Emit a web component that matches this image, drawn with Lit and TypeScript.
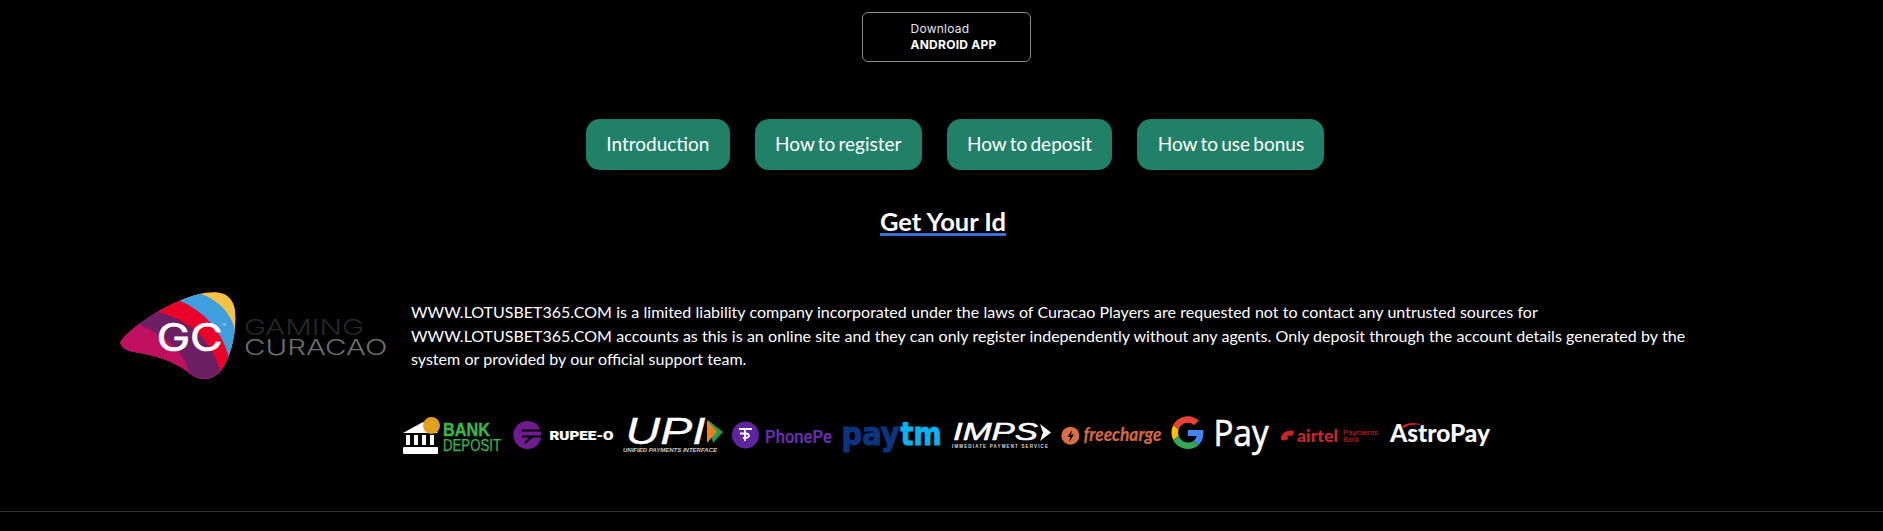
import { LitElement, html, css, svg } from "lit";
import { customElement } from "lit/decorators.js";

const W = "#fff";

@customElement("app-root")
export class AppRoot extends LitElement {
  static styles = css`
    :host { display: block; background: #000; height: 531px; overflow: hidden; font-family: Lato, sans-serif; color: #fff; }
    .dl-row { padding: 12px 0 0 862px; }
    .dl { box-sizing: border-box; width: 169px; height: 50px; border: 1.5px solid #8c8c8c; border-radius: 6px; padding: 8px 0 0 47.5px; font-family: Inter, sans-serif; font-size: 12px; letter-spacing: .25px; line-height: 16px; color: #e6e6e6; }
    .dl b { display: block; font-weight: 700; color: #fff; }
    .tabs { display: flex; gap: 25px; padding: 57px 0 0 586px; }
    .tab { height: 51px; box-sizing: border-box; padding: 0 20.3px 3px; display: flex; align-items: center; background: #208168; border-radius: 14px; font-size: 19px; word-spacing: -1.6px; white-space: nowrap; }
    .title-row { padding: 39px 0 0 880px; }
    .title { display: block; width: max-content; font-size: 25.5px; font-weight: 700; line-height: 24px; border-bottom: 3px solid #3b6fd8; }
    .about { display: flex; align-items: flex-start; padding: 54px 0 0 120px; }
    .gc { width: 270px; height: 90px; flex: none; display: block; }
    .about p { margin: 10px 0 0 21px; width: 1290px; font-size: 16px; line-height: 23.7px; word-spacing: .2px; }
    .pays { display: flex; gap: 9.6px; padding: 36px 0 0 403px; }
    .pay { width: 100px; height: 40px; flex: none; display: block; overflow: visible; }
    .rule { height: 1px; background: #333; margin-top: 55px; }
  `;

  gc() {
    return html`<svg class="gc" viewBox="60 30 810 270">
      <defs><clipPath id="blob"><path d="M62 185C85 150 170 90 240 62C290 40 340 30 372 42C400 55 412 85 405 145C400 195 385 245 360 275C340 297 305 305 275 285C240 250 170 225 100 215C75 210 60 200 62 185Z"/></clipPath></defs>
      <g clip-path="url(#blob)">
        <rect x="0" y="0" width="500" height="340" fill="#f6c244"/>
        <path d="M295 38Q385 70 405 150L405 340L0 340L0 38Z" fill="#3d9fe0"/>
        <path d="M235 60Q350 110 385 225L385 340L0 340L0 60Z" fill="#ea0029"/>
        <path d="M170 95Q320 130 362 275L362 340L0 340L0 95Z" fill="#6c1f62"/>
        <path d="M110 132Q250 180 272 295L272 340L0 340L0 132Z" fill="#c00f5e"/>
      </g>
      <text x="170" y="213" font-family="Inter, sans-serif" font-size="114" fill="#fff" stroke="#fff" stroke-width="2" textLength="198" lengthAdjust="spacingAndGlyphs">GC</text>
      <text x="365" y="138" font-family="Liberation Sans, sans-serif" font-size="9" fill="#ddd">TM</text>
      <text x="432" y="164" font-family="Inter, sans-serif" font-weight="300" font-size="64" fill="#26282b" textLength="360" lengthAdjust="spacingAndGlyphs">GAMING</text>
      <text x="432" y="224" font-family="Inter, sans-serif" font-weight="300" font-size="64" fill="#6f6f6f" textLength="430" lengthAdjust="spacingAndGlyphs">CURACAO</text>
    </svg>`;
  }

  logos() {
    const f = "Roboto, sans-serif";
    return [
      svg`<g fill="${W}"><path d="M0 17L20 6L35 17Z"/><rect x="0" y="31" width="35" height="7" rx="1"/><rect x="3" y="19" width="4" height="10"/><rect x="11" y="19" width="4" height="10"/><rect x="19" y="19" width="4" height="10"/><rect x="27" y="19" width="4" height="10"/></g>
        <circle cx="28.5" cy="9.5" r="8.5" fill="#e3a321"/><circle cx="28.5" cy="9.5" r="6" fill="none" stroke="#c98a14" stroke-width=".8" stroke-dasharray="1 1"/>
        <text x="40" y="20" font-family="Liberation Sans" font-weight="700" font-size="17.5" fill="#3cb54a" stroke="#3cb54a" stroke-width=".4" textLength="47" lengthAdjust="spacingAndGlyphs">BANK</text>
        <text x="40" y="34.7" font-family="Liberation Sans" font-size="16" fill="#3cb54a" stroke="#3cb54a" stroke-width=".25" textLength="58" lengthAdjust="spacingAndGlyphs">DEPOSIT</text>`,
      svg`<circle cx="14.400" cy="19" r="14" fill="#6f1c8f"/>
        <g stroke="#000" stroke-width="2.200" fill="none"><path d="M9 14.500H30M9 20.500H30"/><path d="M12 27L19 20.500"/></g>
        <text x="36.500" y="23.500" font-family="${f}" font-weight="900" font-size="13" fill="${W}" stroke="${W}" stroke-width=".2" textLength="64" lengthAdjust="spacingAndGlyphs">RUPEE-O</text>`,
      svg`<text x="3.500" y="28" font-family="Liberation Sans" font-style="italic" font-size="36" fill="${W}" stroke="${W}" stroke-width=".3" textLength="80" lengthAdjust="spacingAndGlyphs">UPI</text>
        <path d="M86 4L101 16L91 27Z" fill="#1f9d55"/><path d="M85 4L95 16L85 27Z" fill="#ef7d22"/>
        <text x="1" y="36" font-family="Liberation Sans" font-style="italic" font-weight="700" font-size="5" fill="#ccc" textLength="94" lengthAdjust="spacingAndGlyphs">UNIFIED PAYMENTS INTERFACE</text>`,
      svg`<circle cx="13.500" cy="19" r="13.500" fill="#5f259f"/>
        <path d="M7 13H20M13 13V25M8 17.500H14C18 17.500 18 22 13 22L11 22" stroke="#fff" stroke-width="1.800" fill="none"/>
        <text x="33" y="26.500" font-family="${f}" font-weight="500" font-size="18" fill="#6b2fb3" stroke="#6b2fb3" stroke-width=".2" textLength="67" lengthAdjust="spacingAndGlyphs">PhonePe</text>`,
      svg`<text x="0.500" y="29" font-family="DejaVu Sans" font-weight="700" font-size="32" fill="#0c3580" stroke="#0c3580" stroke-width="1.200" textLength="58" lengthAdjust="spacingAndGlyphs">pay</text>
        <text x="59.500" y="29" font-family="DejaVu Sans" font-weight="700" font-size="32" fill="#0cb2ee" stroke="#0cb2ee" stroke-width="1" textLength="41" lengthAdjust="spacingAndGlyphs">tm</text>`,
      svg`<text x="2" y="24" font-family="Liberation Sans" font-style="italic" font-size="24" fill="${W}" stroke="${W}" stroke-width=".5" textLength="85" lengthAdjust="spacingAndGlyphs">IMPS</text>
        <path d="M89 8L100 16.500L89 25L92 16.500Z" fill="${W}"/>
        <text x="1" y="32" font-family="Liberation Sans" font-weight="700" font-size="4.500" fill="#ddd" textLength="96" lengthAdjust="spacing">IMMEDIATE PAYMENT SERVICE</text>`,
      svg`<circle cx="9.400" cy="19.700" r="9" fill="#d96f45"/><path d="M11 14L6.500 21H9.500L8 26L13 18.500H10Z" fill="#000"/>
        <text x="22.500" y="24.700" font-family="Lato" font-weight="700" font-style="italic" font-size="18" fill="#d56a43" stroke="#d56a43" stroke-width=".2" textLength="78" lengthAdjust="spacingAndGlyphs">freecharge</text>`,
      svg`<g transform="translate(1.500 0.300) scale(.68)">
          <path fill="#EA4335" d="M24 9.500c3.540 0 6.710 1.220 9.210 3.600l6.850-6.850C35.900 2.380 30.470 0 24 0 14.620 0 6.510 5.380 2.560 13.220l7.980 6.190C12.430 13.720 17.740 9.500 24 9.500z"/>
          <path fill="#4285F4" d="M46.980 24.550c0-1.570-.15-3.090-.38-4.550H24v9.020h12.940c-.58 2.960-2.260 5.480-4.780 7.180l7.730 6c4.510-4.180 7.090-10.360 7.090-17.650z"/>
          <path fill="#FBBC05" d="M10.530 28.590c-.48-1.450-.76-2.990-.76-4.590s.27-3.140.76-4.590l-7.980-6.190C.92 16.460 0 20.120 0 24c0 3.880.92 7.540 2.560 10.780l7.970-6.190z"/>
          <path fill="#34A853" d="M24 48c6.480 0 11.930-2.130 15.890-5.810l-7.730-6c-2.150 1.450-4.920 2.300-8.160 2.300-6.260 0-11.570-4.220-13.470-9.910l-7.980 6.190C6.510 42.620 14.620 48 24 48z"/>
        </g>
        <text x="43.500" y="29.700" font-family="Open Sans" font-size="36" fill="${W}" stroke="${W}" stroke-width=".6" textLength="55" lengthAdjust="spacingAndGlyphs">Pay</text>`,
      svg`<path d="M1.500 24C-1 19 6 13.500 13 14.500C15 17 13 20 10.500 20C8.500 19.500 6 20 8 21C9 23 5 25.500 1.500 24Z" fill="#c9252b"/>
        <text x="17" y="26" font-family="Lato" font-weight="900" font-size="17.500" fill="#c9252b" textLength="41" lengthAdjust="spacingAndGlyphs">airtel</text>
        <text x="63" y="18.500" font-family="Liberation Sans" font-size="7" fill="#c9252b" textLength="35" lengthAdjust="spacingAndGlyphs">Payments</text>
        <text x="63" y="26" font-family="Liberation Sans" font-size="7" fill="#c9252b">Bank</text>`,
      svg`<text x="1" y="26" font-family="Lato" font-weight="900" font-size="25" fill="${W}" textLength="100" lengthAdjust="spacingAndGlyphs">AstroPay</text>
        <path d="M12 11Q22 4 34 9.500Q23 7 15 11.500Z" fill="#d8222a"/>`,
    ];
  }

  render() {
    return html`
      <div class="dl-row"><div class="dl">Download<b>ANDROID APP</b></div></div>
      <div class="tabs">
        <div class="tab">Introduction</div>
        <div class="tab">How to register</div>
        <div class="tab">How to deposit</div>
        <div class="tab">How to use bonus</div>
      </div>
      <div class="title-row"><span class="title">Get Your Id</span></div>
      <div class="about">
        ${this.gc()}
        <p>WWW.LOTUSBET365.COM is a limited liability company incorporated under the laws of Curacao Players are requested not to contact any untrusted sources for WWW.LOTUSBET365.COM accounts as this is an online site and they can only register independently without any agents. Only deposit through the account details generated by the system or provided by our official support team.</p>
      </div>
      <div class="pays">
        ${this.logos().map((l) => html`<svg class="pay" viewBox="0 0 100 40">${l}</svg>`)}
      </div>
      <div class="rule"></div>
    `;
  }
}
